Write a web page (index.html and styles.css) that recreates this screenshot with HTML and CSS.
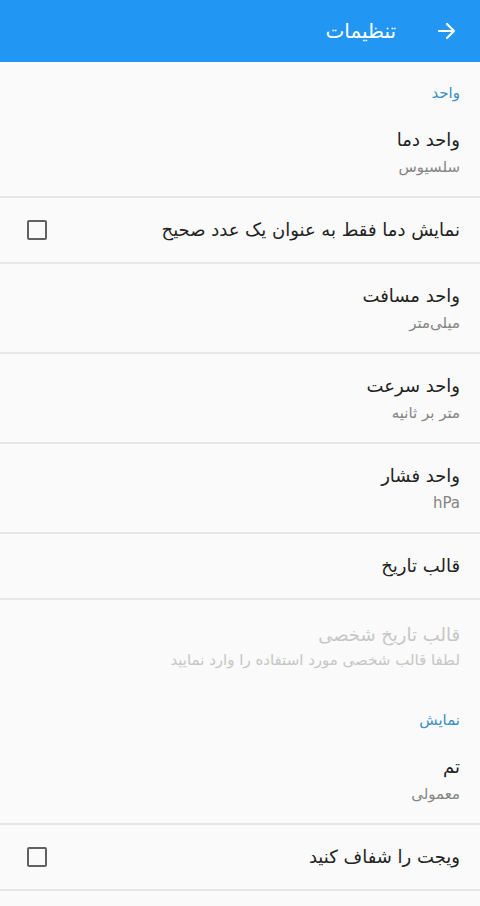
FILE: index.html
```html
<!DOCTYPE html>
<html lang="fa" dir="rtl">
<head>
    <meta charset="UTF-8">
    <meta name="viewport" content="width=device-width, initial-scale=1.0">
    <title>تنظیمات</title>
    <link rel="stylesheet" href="styles.css">
</head>
<body>
    <header class="toolbar">
        <span class="back">
            <svg width="20" height="18" viewBox="0 0 20 18"><path d="M2 9h15M10 2l7 7-7 7" fill="none" stroke="#fff" stroke-width="2.2" stroke-linecap="round" stroke-linejoin="round"/></svg>
        </span>
        <h1>تنظیمات</h1>
    </header>

    <div class="category">واحد</div>
    <div class="pref">
        <div class="title">واحد دما</div>
        <div class="summary">سلسیوس</div>
    </div>
    <div class="pref check">
        <div class="title">نمایش دما فقط به عنوان یک عدد صحیح</div>
        <span class="box"></span>
    </div>
    <div class="pref">
        <div class="title">واحد مسافت</div>
        <div class="summary">میلی‌متر</div>
    </div>
    <div class="pref">
        <div class="title">واحد سرعت</div>
        <div class="summary">متر بر ثانیه</div>
    </div>
    <div class="pref">
        <div class="title">واحد فشار</div>
        <div class="summary">hPa</div>
    </div>
    <div class="pref single">
        <div class="title">قالب تاریخ</div>
    </div>
    <div class="pref disabled">
        <div class="title">قالب تاریخ شخصی</div>
        <div class="summary">لطفا قالب شخصی مورد استفاده را وارد نمایید</div>
    </div>

    <div class="category">نمایش</div>
    <div class="pref">
        <div class="title">تم</div>
        <div class="summary">معمولی</div>
    </div>
    <div class="pref check">
        <div class="title">ویجت را شفاف کنید</div>
        <span class="box"></span>
    </div>
</body>
</html>
```

FILE: styles.css
```css
body {
    font-family: "DejaVu Sans", "Noto Sans", sans-serif;
    background-color: #fafafa;
    color: #222;
    margin: 0;
}
.toolbar {
    height: 62px;
    background-color: #2196f3;
    display: flex;
    align-items: center;
    padding: 0 23px 0 0;
    direction: ltr;
    flex-direction: row-reverse;
    justify-content: flex-start;
}
.back {
    display: flex;
    width: 20px;
    height: 18px;
    margin-left: 41px;
}
.toolbar h1 {
    margin: 0;
    font-size: 20px;
    font-weight: normal;
    color: #fff;
}
.category {
    color: #3a8fc4;
    font-size: 15px;
    line-height: 22px;
    padding: 20px 20px 0;
    height: 26px;
}
.pref {
    padding: 20px 20px 0;
    height: 68px;
    border-bottom: 2px solid #e6e6e6;
}
.pref .title {
    font-size: 18px;
    line-height: 24px;
}
.pref .summary {
    font-size: 15px;
    color: #858585;
    margin-top: 5px;
    line-height: 20px;
}
.pref.check {
    height: 64px;
    padding: 0 20px 0 27px;
    display: flex;
    align-items: center;
    justify-content: space-between;
}
.pref.single {
    height: 64px;
    padding: 0 20px;
    display: flex;
    align-items: center;
}
.pref.disabled {
    border-bottom: none;
    height: 66px;
    padding-top: 23px;
}
.pref.disabled .title,
.pref.disabled .summary {
    color: #c6c6c6;
}
.pref.disabled .summary {
    margin-top: 3px;
}
.box {
    width: 16px;
    height: 16px;
    border: 2px solid #616161;
    border-radius: 2px;
}
```
